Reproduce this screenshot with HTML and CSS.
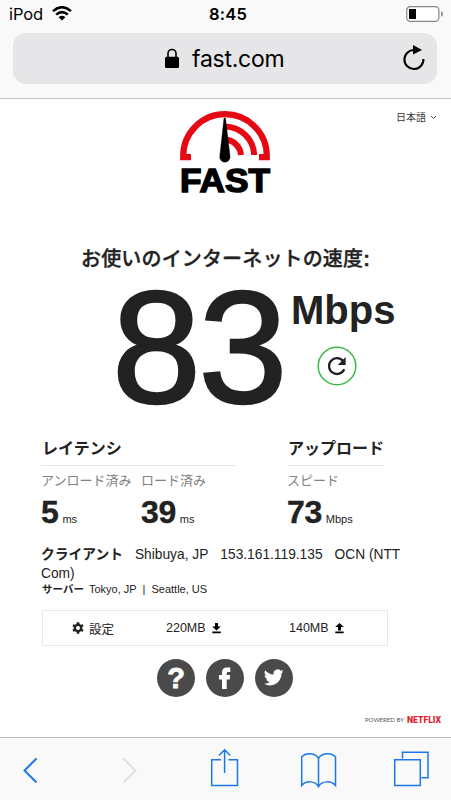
FILE: index.html
```html
<!DOCTYPE html>
<html lang="ja">
<head>
<meta charset="utf-8">
<title>fast.com</title>
<link rel="stylesheet" href="styles.css">
</head>
<body>
<header class="browser">
  <div class="status">
    <span class="device">iPod</span>
    <svg class="wifi" width="20" height="15" viewBox="0 0 20 15"><g fill="none" stroke="#000" stroke-width="2.5"><path d="M1 5.1Q10-2.7 19 5.1"/><path d="M4.2 8.6Q10 3.6 15.8 8.6"/></g><path d="M6.6 11.2Q10 8.4 13.4 11.2L10 14.6Z"/></svg>
    <span class="clock">8:45</span>
    <svg class="battery" width="38" height="16" viewBox="0 0 38 16"><rect x=".7" y=".7" width="32.2" height="14.6" rx="3.6" fill="#fff" stroke="#888" stroke-width="1.2"/><rect x="3" y="3" width="7" height="10"/><path d="M35 5.2Q37 6 37 8T35 10.8Z" fill="#888"/></svg>
  </div>
  <div class="address">
    <svg class="lock" width="16" height="21" viewBox="0 0 16 21"><path d="M4 10V5.5a4 4 0 0 1 8 0V10" fill="none" stroke="#000" stroke-width="1.6"/><rect x="1" y="8.7" width="14" height="11.3" rx="1.5"/></svg>
    <span class="url">fast.com</span>
    <svg class="reload" width="24" height="28" viewBox="0 0 24 28"><path d="M12.2 6A9.5 9.5 0 1 0 21.4 15" fill="none" stroke="#000" stroke-width="2.1"/><path d="M11 1L20 6L11 10.5Z"/></svg>
  </div>
</header>
<main>
  <div class="masthead">
    <svg class="logo" width="92" height="86" viewBox="0 0 92 86">
      <g fill="none" stroke="#e50914"><path d="M12 47.2H4.2V46A41.8 41.8 0 0 1 87.800 46V47.2H80" stroke-width="6.2"/><path d="M46 16.5A29.700 29.700 0 0 1 75.200 45M46 29.500A17 17 0 0 1 62 45" stroke-width="6"/></g>
      <path d="M45 8H46.500L51 46A5.200 5.200 0 1 1 40.800 46Z" stroke="#000" stroke-width=".4"/>
      <text x="1" y="82" textLength="90" lengthAdjust="spacingAndGlyphs">FAST</text>
    </svg>
    <div class="language">日本語 <svg width="7" height="5" viewBox="0 0 7 5"><path d="M1 1l2.5 2.5L6 1" fill="none" stroke="#444"/></svg></div>
  </div>
  <h1>お使いのインターネットの速度<b>:</b></h1>
  <section class="speed">
    <div class="value">83</div>
    <div class="side">
      <div class="unit">Mbps</div>
      <svg class="again" width="40" height="40" viewBox="0 0 40 40"><circle cx="20" cy="20" r="18.8" fill="#fff" stroke="#3bb944" stroke-width="1.5"/><path d="M26.200 15.200A7.900 7.900 0 1 0 27.200 23.200" fill="none" stroke="#221f2b" stroke-width="2.300"/><path d="M28.600 11V18.900H20.800Z" fill="#221f2b"/></svg>
    </div>
  </section>
  <section class="metrics">
    <div class="latency">
      <h2>レイテンシ</h2>
      <div class="pair">
        <div class="unloaded"><div class="label">アンロード済み</div><div class="figure"><b>5</b><span>ms</span></div></div>
        <div><div class="label">ロード済み</div><div class="figure"><b>39</b><span>ms</span></div></div>
      </div>
    </div>
    <div class="upload">
      <h2>アップロード</h2>
      <div class="label">スピード</div>
      <div class="figure"><b>73</b><span>Mbps</span></div>
    </div>
  </section>
  <section class="client">
    <div class="line"><b>クライアント</b><span>Shibuya, JP</span><span>153.161.119.135</span><span>OCN (NTT</span></div>
    <div class="line">Com)</div>
  </section>
  <section class="server"><b>サーバー</b><span>Tokyo, JP</span><i>|</i><span>Seattle, US</span></section>
  <section class="panel">
    <div class="settings"><svg width="12" height="12" viewBox="0 0 12 12"><circle cx="6" cy="6" r="3.200" fill="none" stroke="#222" stroke-width="2.400"/><path d="M6 .2V2M6 10v1.8M1 3.1l1.5.9M9.5 8l1.5.9M1 8.9L2.5 8M9.5 4L11 3.1" stroke="#222" stroke-width="2.600"/></svg>設定</div>
    <div class="down">220MB<svg width="9" height="11" viewBox="0 0 9 11"><path d="M3 0H6V3.5H8.8L4.5 7.6L.2 3.5H3ZM.3 8.6H8.7V10.2H.3Z"/></svg></div>
    <div class="up">140MB<svg width="9" height="11" viewBox="0 0 9 11"><path d="M3 7.6H6V4.1H8.8L4.5 0L.2 4.1H3ZM.3 8.6H8.7V10.2H.3Z"/></svg></div>
  </section>
  <nav class="social">
    <span class="round help">?</span>
    <svg class="round" viewBox="0 0 38 38"><path d="M16 30V20.5H13V16H16V13.5Q16 8.5 21 8.5H24.3V13H22Q20.7 13 20.7 14.4V16H24.2L23.7 20.5H20.7V30Z" fill="#fff"/></svg>
    <svg class="round" viewBox="0 0 38 38"><path transform="translate(8.8 8.2) scale(.84)" d="M23.6 4.9c-.9.4-1.8.6-2.7.8 1-.6 1.7-1.5 2.1-2.6-.9.5-1.9.9-3 1.1a4.8 4.8 0 0 0-8.2 4.4C7.7 8.400 4.100 6.500 1.700 3.500a4.800 4.800 0 0 0 1.500 6.400c-.8 0-1.500-.2-2.200-.6a4.800 4.800 0 0 0 3.800 4.800c-.7.2-1.400.2-2.100.1a4.800 4.800 0 0 0 4.400 3.300A9.600 9.600 0 0 1 0 19.500a13.600 13.600 0 0 0 7.400 2.200c9 0 14-7.600 13.700-14.400 1-.7 1.800-1.500 2.500-2.400Z" fill="#fff"/></svg>
  </nav>
  <footer><svg width="80" height="12" viewBox="0 0 80 12"><text class="powered" x="2" y="8.500" textLength="39" lengthAdjust="spacingAndGlyphs">POWERED BY</text><text class="brand" x="44" y="10" textLength="34" lengthAdjust="spacingAndGlyphs">NETFLIX</text></svg></footer>
</main>
<nav class="toolbar">
  <svg width="451" height="62" viewBox="0 0 451 62" fill="none" stroke="#1a78e8" stroke-width="1.500">
    <path d="M36.500 20.500L24.500 32.500L36.500 44.500" stroke-width="2"/>
    <path d="M123.500 20.500L135.500 32.500L123.500 44.500" stroke="#dedede" stroke-width="1.800"/>
    <path d="M221 21.700H211.700V47.500H237.500V21.700H228.500M224.600 35V12M219 17.500L224.600 11.700L230.300 17.500"/>
    <path d="M318.500 20.500C315.500 14.500 305.500 14.500 301.700 19V47.500C306 42.500 315 42.500 318.500 48.500C322 42.500 331 42.500 335.500 47.500V19C331.500 14.500 321.500 14.500 318.500 20.500V48.500"/>
    <path d="M394.700 21.700H420.300V47.500H394.700ZM402.500 20.500V14.200H428V39.700H421.500"/>
  </svg>
</nav>
</body>
</html>
```
FILE: styles.css
```css
* { box-sizing: border-box; }
body { margin: 0; width: 451px; height: 800px; overflow: hidden; background: #fff; color: #222; display: flex; flex-direction: column; font-family: "Liberation Sans", "Noto Sans CJK JP", sans-serif; }
svg { display: block; flex: none; }
h1, h2 { margin: 0; }
.browser { height: 99px; background: #f9f9f9; border-bottom: 1px solid #c4c7c7; color: #000; }
.status { height: 33px; display: flex; padding: 5px 8px 0 9px; font: 17px/18px Inter, sans-serif; }
.device { width: 43px; font-size: 16.5px; letter-spacing: -.1px; }
.clock { margin-left: 137px; font-weight: 600; font-size: 16.5px; width: 60px; letter-spacing: .2px; }
.wifi { margin-top: 1px; }
.battery { margin: 1px -1px 0 auto; }
.address { margin: 0 14px 0 13px; height: 51px; border-radius: 13px; background: #e6e6e8; display: flex; align-items: center; padding: 0 11px 0 151px; }
.lock { margin-top: -1px; }
.url { margin-left: 12px; font: 23px/28px Inter, sans-serif; letter-spacing: -.25px; }
.reload { margin-left: auto; margin-top: -2px; }
main { height: 638px; }
.masthead { height: 145px; display: flex; padding: 11px 14px 0 179px; }
.logo text { font: 700 34px "Liberation Sans", sans-serif; stroke: #000; stroke-width: 1.5px; }
.language { margin-left: auto; margin-top: 1px; height: 13px; display: flex; align-items: center; gap: 4px; font-size: 10px; line-height: 13px; color: #333; }
h1 { height: 28px; text-align: center; font-size: 20px; line-height: 30px; font-weight: 500; -webkit-text-stroke: .35px #222; letter-spacing: .15px; }
.speed { display: flex; height: 164px; padding-left: 112px; }
.value { width: 179px; font-size: 160px; line-height: 150px; letter-spacing: -2.5px; -webkit-text-stroke: 2.5px #222; }
.side { padding-top: 15px; }
.unit { font-size: 40px; line-height: 46px; font-weight: 700; }
.again { margin: 13px 0 0 26px; }
.metrics { display: flex; padding-left: 41px; height: 105px; }
.latency { width: 195px; margin-right: 51px; }
.upload { width: 98px; }
h2 { height: 30px; border-bottom: 1px solid #e6e6e6; font-size: 16px; line-height: 25px; padding-left: 1px; }
.pair { display: flex; }
.unloaded { width: 100px; }
.label { height: 30px; font-size: 13px; line-height: 30px; color: #808080; white-space: nowrap; }
.figure { line-height: 32px; font-size: 11px; display: flex; align-items: baseline; gap: 4px; }
.figure b { font-size: 32px; letter-spacing: -.4px; -webkit-text-stroke: .4px #222; }
.client { height: 39px; padding: 4px 0 0 41px; }
.line { display: flex; gap: 12px; font-size: 13.75px; line-height: 19px; white-space: nowrap; }
.server { height: 30px; padding: 1px 0 0 42px; font-size: 11px; line-height: 16px; }
.server b { font-size: 10.5px; margin-right: 5px; }
.server i { font-style: normal; margin: 0 6px; }
.panel { width: 346px; height: 36px; margin-left: 42px; border: 1px solid #e8e8e8; display: flex; align-items: center; font-size: 12.5px; }
.panel > div { display: flex; align-items: center; gap: 5px; }
.settings { width: 123px; padding-left: 29px; }
.down { width: 123px; }
.panel .down, .panel .up { gap: 6px; }
.social { height: 62px; display: flex; gap: 11px; padding: 13px 0 0 157px; }
.round { width: 38px; height: 38px; border-radius: 50%; background: #4a4a4a; color: #fff; }
.help { text-align: center; font-size: 29px; line-height: 38px; font-weight: 700; -webkit-text-stroke: .8px #fff; }
footer { display: flex; justify-content: flex-end; padding: 5px 8px 0 0; }
.powered { font: 6px Lato, sans-serif; fill: #555; }
.brand { font: 900 9.5px Roboto, sans-serif; fill: #dc1f2e; }
.toolbar { height: 63px; background: #f9f9f9; border-top: 1px solid #bbb; }
```
